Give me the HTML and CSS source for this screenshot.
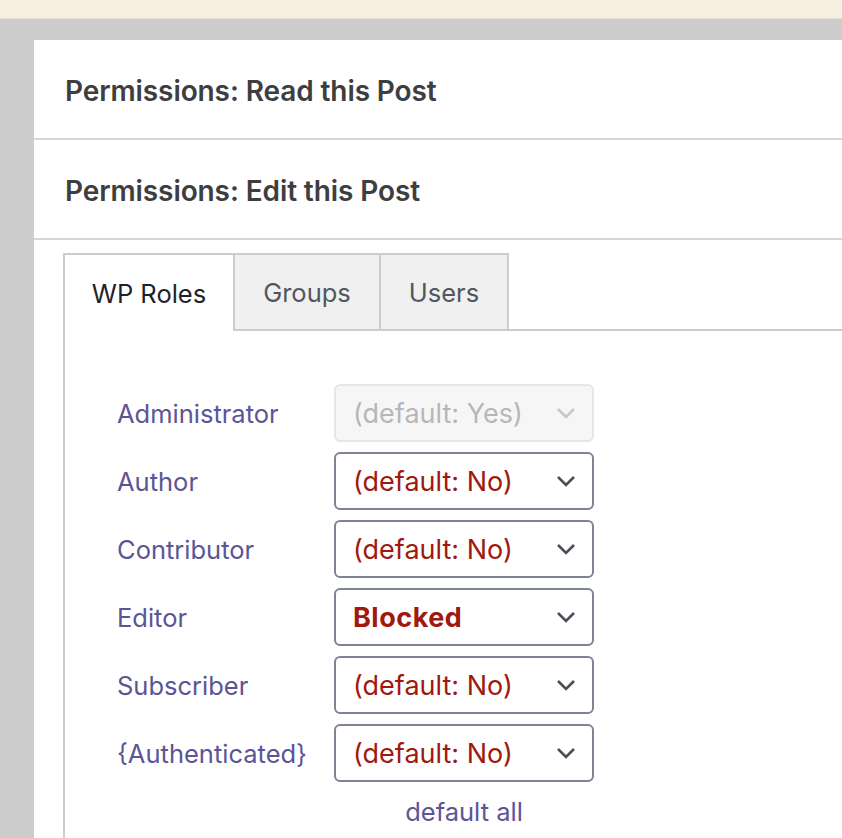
FILE: index.html
```html
<!DOCTYPE html>
<html lang="en">
<head>
  <meta charset="UTF-8" />
  <meta name="viewport" content="width=device-width,initial-scale=1.0" />
  <title>Permissions</title>
  <link rel="stylesheet" href="styles.css">
</head>
<body>
  <!-- admin notice strip -->
  <div class="top-strip"></div>

  <div class="screen">
    <div class="postbox">
      <div class="postbox-header">
        <h2>Permissions: Read this Post</h2>
      </div>
      <div class="postbox-header">
        <h2>Permissions: Edit this Post</h2>
      </div>

      <div class="inside">
        <!-- Tabs -->
        <ul class="tabs">
          <li class="tab active">WP Roles</li>
          <li class="tab">Groups</li>
          <li class="tab">Users</li>
          <li class="tab-fill"></li>
        </ul>

        <div class="tab-panel">
          <div class="role-row">
            <label class="role-name">Administrator</label>
            <div class="select disabled">
              <span>(default: Yes)</span>
              <svg class="chevron" viewBox="0 0 20 12"><polyline points="2,2 10,10 18,2" /></svg>
            </div>
          </div>
          <div class="role-row">
            <label class="role-name">Author</label>
            <div class="select">
              <span>(default: No)</span>
              <svg class="chevron" viewBox="0 0 20 12"><polyline points="2,2 10,10 18,2" /></svg>
            </div>
          </div>
          <div class="role-row">
            <label class="role-name">Contributor</label>
            <div class="select">
              <span>(default: No)</span>
              <svg class="chevron" viewBox="0 0 20 12"><polyline points="2,2 10,10 18,2" /></svg>
            </div>
          </div>
          <div class="role-row">
            <label class="role-name">Editor</label>
            <div class="select blocked">
              <span>Blocked</span>
              <svg class="chevron" viewBox="0 0 20 12"><polyline points="2,2 10,10 18,2" /></svg>
            </div>
          </div>
          <div class="role-row">
            <label class="role-name">Subscriber</label>
            <div class="select">
              <span>(default: No)</span>
              <svg class="chevron" viewBox="0 0 20 12"><polyline points="2,2 10,10 18,2" /></svg>
            </div>
          </div>
          <div class="role-row">
            <label class="role-name">{Authenticated}</label>
            <div class="select">
              <span>(default: No)</span>
              <svg class="chevron" viewBox="0 0 20 12"><polyline points="2,2 10,10 18,2" /></svg>
            </div>
          </div>
          <div class="role-row">
            <span class="role-name"></span>
            <a class="default-all" href="#">default all</a>
          </div>
        </div>
      </div>
    </div>
  </div>
</body>
</html>
```

FILE: styles.css
```css
/* Base */
body {
  margin: 0;
  padding: 0;
  background-color: #cdcdcd;
  font-family: "Inter", "Liberation Sans", sans-serif;
  overflow: hidden;
  height: 838px;
}

.top-strip {
  height: 18px;
  background-color: #f6efe2;
  border-bottom: 1px solid #e4e0d8;
}

.screen {
  padding: 21px 0 0 34px;
}

/* Postbox */
.postbox {
  background: #fff;
  height: 798px;
}
.postbox-header {
  box-sizing: border-box;
  height: 100px;
  border-bottom: 2px solid #d6d6d8;
  display: flex;
  align-items: center;
  padding: 3px 0 0 31px;
}
.postbox-header h2 {
  margin: 0;
  font-size: 28px;
  font-weight: 600;
  color: #3e3e41;
  letter-spacing: -0.1px;
}

.inside {
  padding: 13px 0 0 29px;
}

/* Tabs */
.tabs {
  list-style: none;
  margin: 0;
  padding: 0;
  display: flex;
  height: 78px;
}
.tab {
  box-sizing: border-box;
  display: flex;
  align-items: center;
  justify-content: center;
  border: 2px solid #cccccc;
  border-left: none;
  background: #f0f0f0;
  color: #50575e;
  font-size: 25.5px;
}
.tab:nth-child(1) { width: 172px; }
.tab:nth-child(2) { width: 146px; }
.tab:nth-child(3) { width: 128px; }
.tab.active {
  background: #fff;
  color: #1d2327;
  border-left: 2px solid #cccccc;
  border-bottom: none;
}
.tab-fill {
  flex: 1;
  border-bottom: 2px solid #cccccc;
}

.tab-panel {
  border-left: 2px solid #cccccc;
  padding: 53px 0 0 52px;
  height: 470px;
}

/* Role rows */
.role-row {
  display: flex;
  align-items: center;
  margin-bottom: 10px;
}
.role-name {
  width: 217px;
  color: #5b5596;
  font-size: 25.5px;
}

.select {
  box-sizing: border-box;
  width: 260px;
  height: 58px;
  border: 2px solid #7e8396;
  border-radius: 6px;
  display: flex;
  align-items: center;
  justify-content: space-between;
  padding: 0 16px 0 17px;
  color: #a0190e;
  font-size: 27px;
}
.select.blocked {
  font-weight: 700;
  letter-spacing: 0.5px;
}
.select.disabled {
  background: #f6f6f6;
  border-color: #e6e6e6;
  color: #b6b6bc;
}

.chevron {
  width: 20px;
  height: 12px;
  fill: none;
  stroke: #4a4e55;
  stroke-width: 2.6;
}
.select.disabled .chevron {
  stroke: #c6c6cc;
}

.default-all {
  width: 260px;
  text-align: center;
  color: #5b5596;
  font-size: 25.5px;
  text-decoration: none;
  margin-top: 4px;
}
```
